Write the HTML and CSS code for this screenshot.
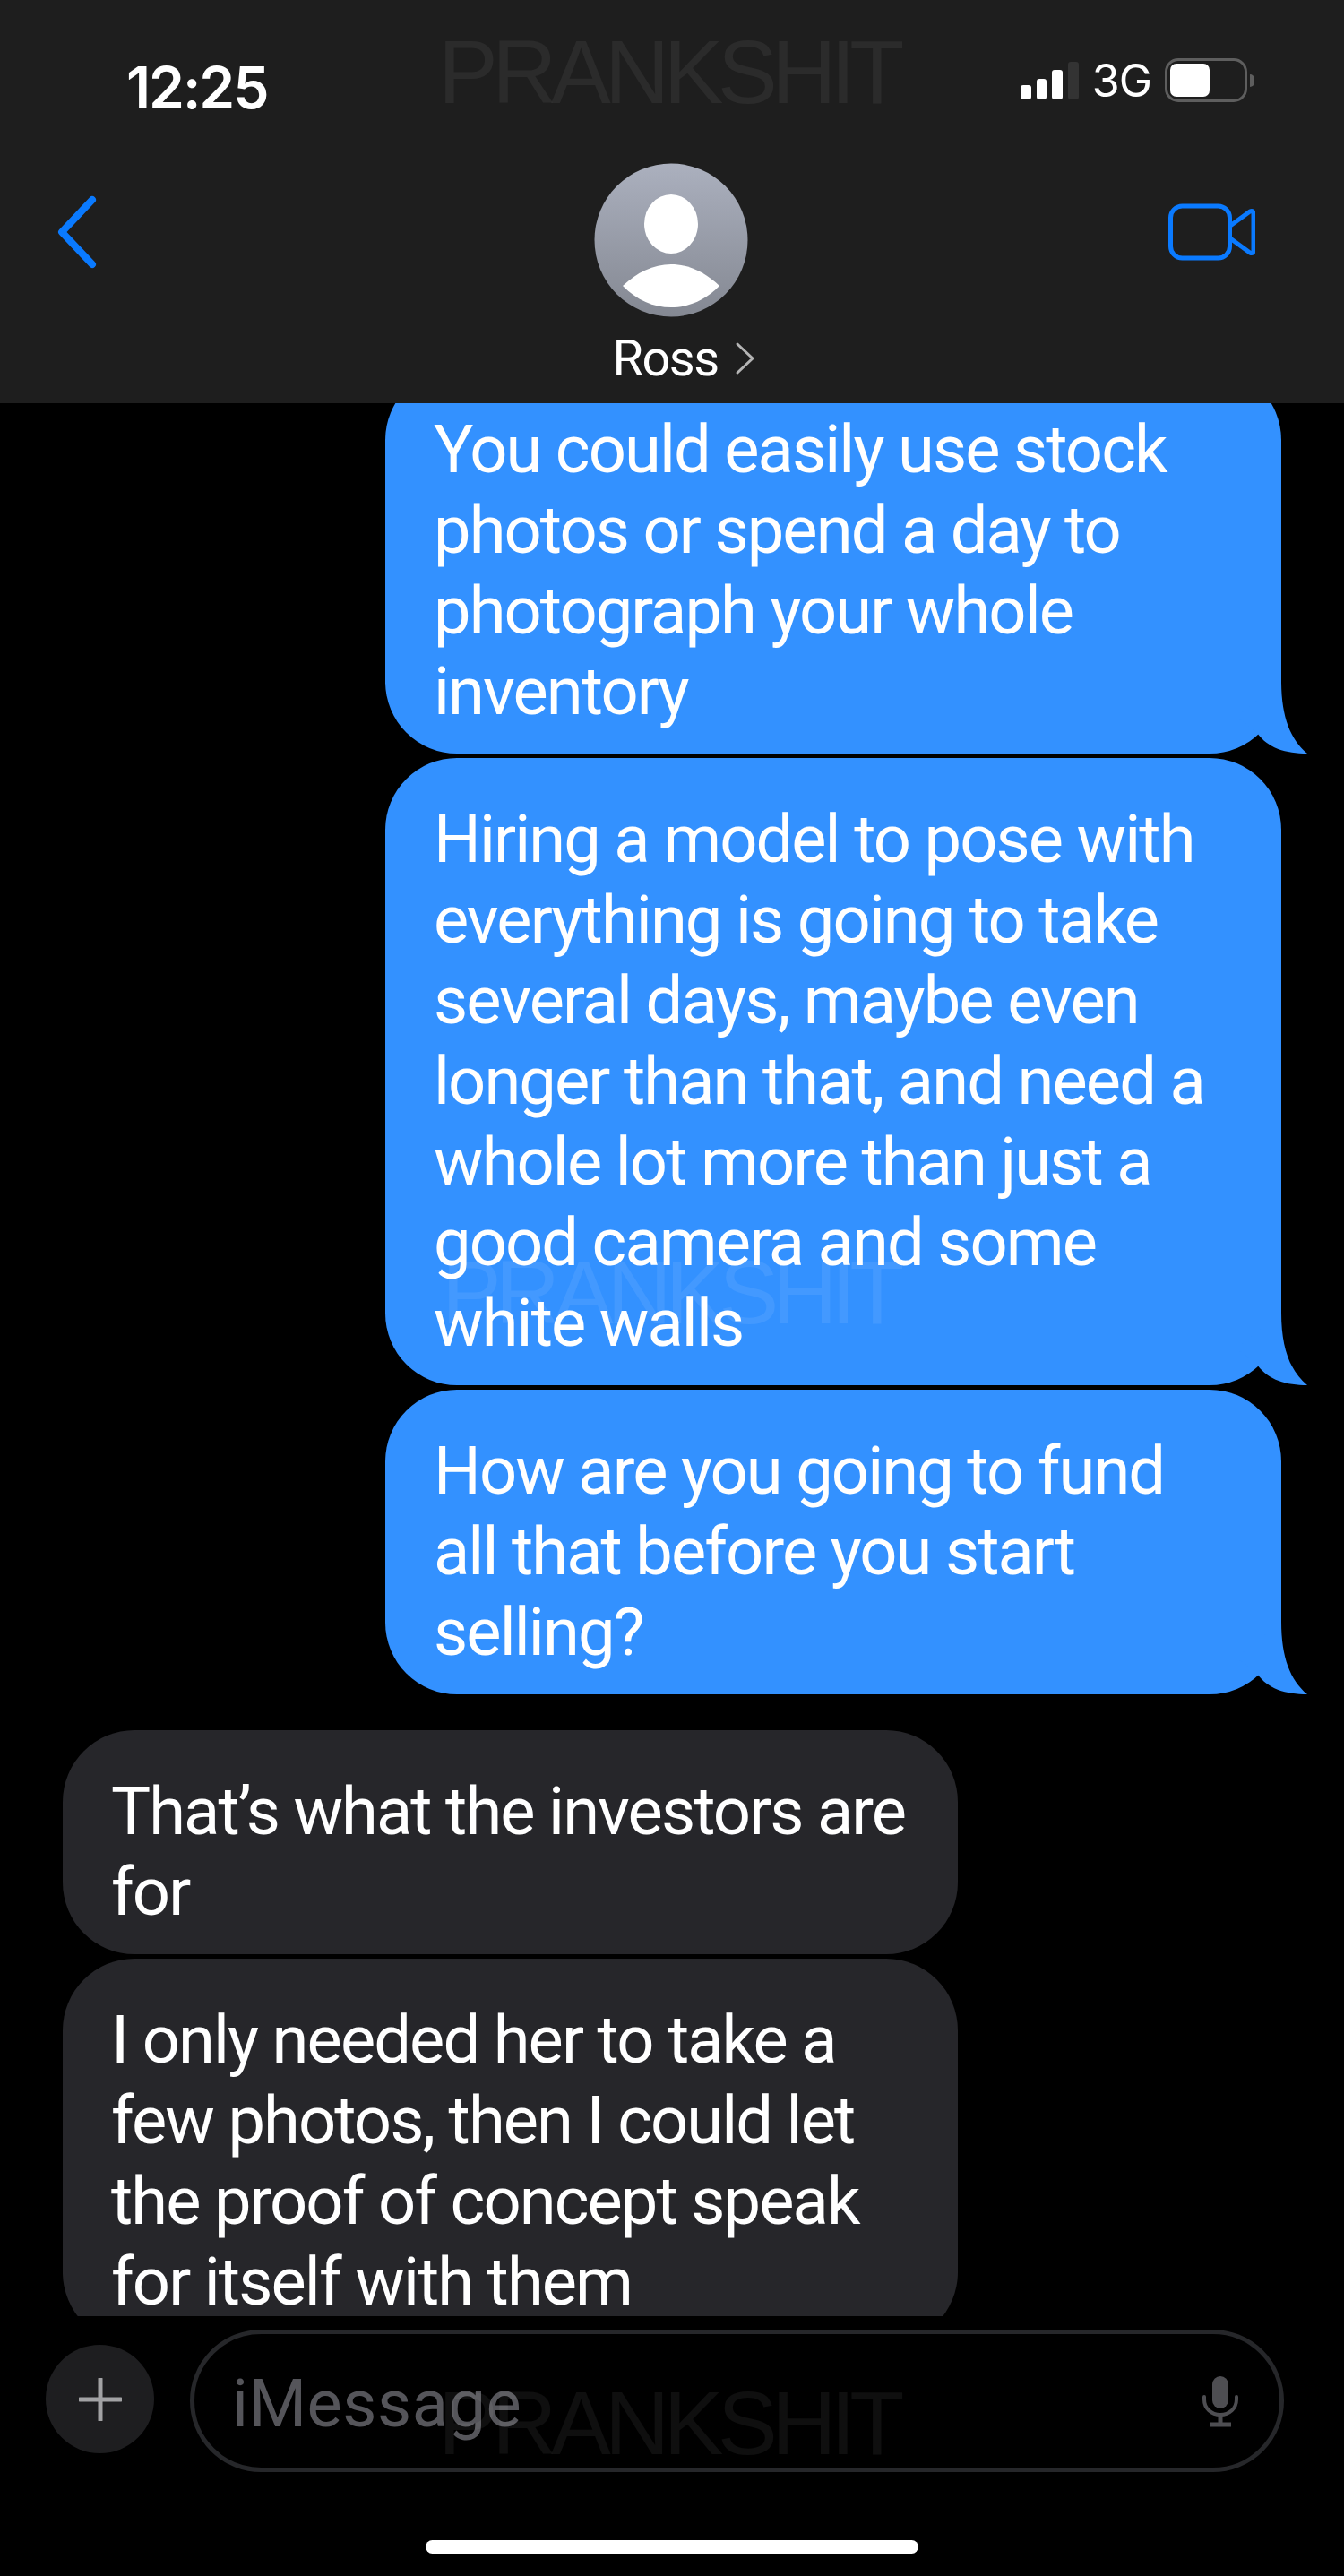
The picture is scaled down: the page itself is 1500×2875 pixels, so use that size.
FILE: index.html
```html
<!DOCTYPE html>
<html lang="en">
<head>
<meta charset="utf-8">
<title>Messages</title>
<link rel="stylesheet" href="styles.css">
</head>
<body>
<div class="phone">
  <header class="header">
    <div class="status">
      <span class="time">12:25</span>
      <div class="indicators">
        <div class="signal"><i class="bar b1"></i><i class="bar b2"></i><i class="bar b3"></i><i class="bar b4"></i></div>
        <span class="net">3G</span>
        <div class="battery"><div class="battery-fill"></div></div>
        <div class="battery-nub"></div>
      </div>
    </div>
    <div class="nav">
      <svg class="back" width="50" height="84" viewBox="0 0 50 84"><path d="M41 6 L7 42 L41 78" fill="none" stroke="#0a7aff" stroke-width="8" stroke-linecap="round" stroke-linejoin="round"/></svg>
      <div class="contact">
        <svg class="avatar" width="172" height="172" viewBox="0 0 172 172">
          <defs><linearGradient id="av" x1="0" y1="0" x2="0" y2="1"><stop offset="0" stop-color="#abb0be"/><stop offset="1" stop-color="#848892"/></linearGradient></defs>
          <circle cx="86" cy="86" r="85.5" fill="url(#av)"/>
          <ellipse cx="86" cy="68" rx="30" ry="33" fill="#fff"/>
          <path d="M32 137 C48 122 66 113 86 113 C106 113 124 122 140 137 C124 153 106 161 86 161 C66 161 48 153 32 137 Z" fill="#fff"/>
        </svg>
        <div class="name"><span>Ross</span><svg width="24" height="38" viewBox="0 0 24 38"><path d="M3 3 L20 19 L3 35" fill="none" stroke="#b4b4b4" stroke-width="3" stroke-linecap="round" stroke-linejoin="round"/></svg></div>
      </div>
      <svg class="video" width="98" height="64" viewBox="0 0 98 64"><rect x="3.5" y="3" width="66" height="58" rx="13" fill="none" stroke="#0a7aff" stroke-width="5"/><path d="M70 25 L92 9 Q96 7 96 12 L96 52 Q96 57 92 55 L70 39" fill="none" stroke="#0a7aff" stroke-width="5" stroke-linejoin="round"/></svg>
    </div>
  </header>

  <main class="thread">
    <div class="bubble sent first">You could easily use stock<br>photos or spend a day to<br>photograph your whole<br>inventory<svg class="tail" width="80" height="81" viewBox="0 0 80 81"><path d="M50 0 C50 40 60 65 79 81 C55 81 35 75 23 58 L0 40 Z" fill="#3391ff"/></svg></div>
    <div class="bubble sent">Hiring a model to pose with<br>everything is going to take<br>several days, maybe even<br>longer than that, and need a<br>whole lot more than just a<br>good camera and some<br>white walls<svg class="tail" width="80" height="81" viewBox="0 0 80 81"><path d="M50 0 C50 40 60 65 79 81 C55 81 35 75 23 58 L0 40 Z" fill="#3391ff"/></svg></div>
    <div class="bubble sent">How are you going to fund<br>all that before you start<br>selling?<svg class="tail" width="80" height="81" viewBox="0 0 80 81"><path d="M50 0 C50 40 60 65 79 81 C55 81 35 75 23 58 L0 40 Z" fill="#3391ff"/></svg></div>
    <div class="bubble received group-start">That’s what the investors are<br>for</div>
    <div class="bubble received">I only needed her to take a<br>few photos, then I could let<br>the proof of concept speak<br>for itself with them</div>
  </main>

  <div class="composer">
    <div class="plus"><svg width="48" height="48" viewBox="0 0 48 48"><path d="M24 1 V47 M1 24 H47" stroke="#a2a2a4" stroke-width="5" stroke-linecap="round"/></svg></div>
    <div class="field">
      <span class="placeholder">iMessage</span>
      <svg class="mic" width="44" height="58" viewBox="0 0 44 58"><rect x="13" y="1" width="18" height="36" rx="9" fill="#4e4e52"/><path d="M4 24 V27 C4 37 12 44 22 44 C32 44 40 37 40 27 V24" fill="none" stroke="#4e4e52" stroke-width="4" stroke-linecap="round"/><path d="M22 44 V54 M10 55 H34" stroke="#4e4e52" stroke-width="5"/></svg>
    </div>
  </div>
  <div class="home-area"><div class="home-bar"></div></div>

  <div class="mark mark-top">PRANKSHIT</div>
  <div class="mark mark-mid">PRANKSHIT</div>
  <div class="mark mark-bottom">PRANKSHIT</div>
</div>
</body>
</html>
```
FILE: styles.css
```css
* { box-sizing: border-box; }
html, body { margin: 0; padding: 0; background: #000; }
body { font-family: "Roboto", "Liberation Sans", sans-serif; color: #fff; }
.phone { position: relative; width: 1500px; height: 2875px; display: flex; flex-direction: column; overflow: hidden; background: #000; }

.header { height: 450px; flex: none; background: #1e1e1e; display: flex; flex-direction: column; }
.status { height: 182px; flex: none; display: flex; justify-content: space-between; align-items: flex-start; padding: 0 100px 0 141px; }
.time { font-family: "Inter", sans-serif; font-weight: 600; font-size: 64px; letter-spacing: -2px; line-height: 78px; margin-top: 59px; }
.indicators { display: flex; align-items: flex-start; margin-top: 65px; position: relative; }
.signal { display: flex; gap: 6px; align-items: flex-end; height: 46px; width: 65px; }
.bar { display: block; width: 12px; background: #fff; border-radius: 3px; }
.b1 { height: 16px; } .b2 { height: 23px; } .b3 { height: 33px; } .b4 { height: 42px; background: #333; }
.net { font-family: "Inter", sans-serif; font-size: 50px; line-height: 50px; margin: 0 15px; letter-spacing: -1px; }
.battery { width: 92px; height: 49px; border: 3px solid #5e5e5e; border-radius: 15px; padding: 3px; }
.battery-fill { width: 44px; height: 100%; background: #fff; border-radius: 7px; }
.battery-nub { width: 5px; height: 14px; margin: 18px 0 0 3px; background: #5e5e5e; border-radius: 0 7px 7px 0; }

.nav { flex: 1; display: flex; justify-content: space-between; align-items: flex-start; padding: 0 99px 0 62px; position: relative; }
.back { margin-top: 35px; }
.video { margin-top: 45px; margin-right: 0; }
.contact { display: flex; flex-direction: column; align-items: center; margin-left: 82px; }
.avatar { display: block; }
.name { display: flex; align-items: center; gap: 18px; font-family: "Roboto", sans-serif; font-size: 56px; line-height: 60px; letter-spacing: -1.5px; margin-top: 16px; margin-left: 30px; }

.thread { flex: none; height: 2135px; overflow: hidden; display: flex; flex-direction: column; gap: 5px; }
.bubble { position: relative; flex: none; padding: 46px 55px 24px 54px; border-radius: 80px; font-size: 74px; line-height: 90px; letter-spacing: -1.9px; white-space: nowrap; }
.sent { width: 1000px; margin-left: 430px; background: #3391ff; }
.first { margin-top: -39px; }
.received { width: 999px; margin-left: 70px; background: #26262a; }
.group-start { margin-top: 35px; }
.tail { position: absolute; right: -30px; bottom: 0; display: block; }

.composer { flex: none; height: 190px; display: flex; align-items: flex-start; gap: 40px; padding: 15px 67px 0 51px; }
.plus { width: 121px; height: 121px; flex: none; border-radius: 50%; background: #1e1e20; display: flex; align-items: center; justify-content: center; margin-top: 17px; }
.field { flex: 1; height: 159px; border: 5px solid #26272a; border-radius: 80px; display: flex; align-items: center; justify-content: space-between; padding: 0 44px 0 42px; }
.placeholder { font-size: 74px; line-height: 90px; letter-spacing: 0.5px; color: #55555a; margin-top: 7px; }
.mic { display: block; }
.home-area { flex: none; height: 100px; display: flex; justify-content: center; align-items: flex-start; padding-top: 60px; }
.home-bar { width: 550px; height: 15px; border-radius: 8px; background: #fff; }

.mark { position: absolute; left: 489px; font-family: "Liberation Sans", sans-serif; font-size: 100px; line-height: 100px; letter-spacing: -6.5px; color: rgba(255,255,255,0.06); white-space: nowrap; pointer-events: none; }
.mark-top { top: 30px; }
.mark-mid { top: 1392px; left: 493px; letter-spacing: -7px; color: rgba(255,255,255,0.08); }
.mark-bottom { top: 2654px; }
```
